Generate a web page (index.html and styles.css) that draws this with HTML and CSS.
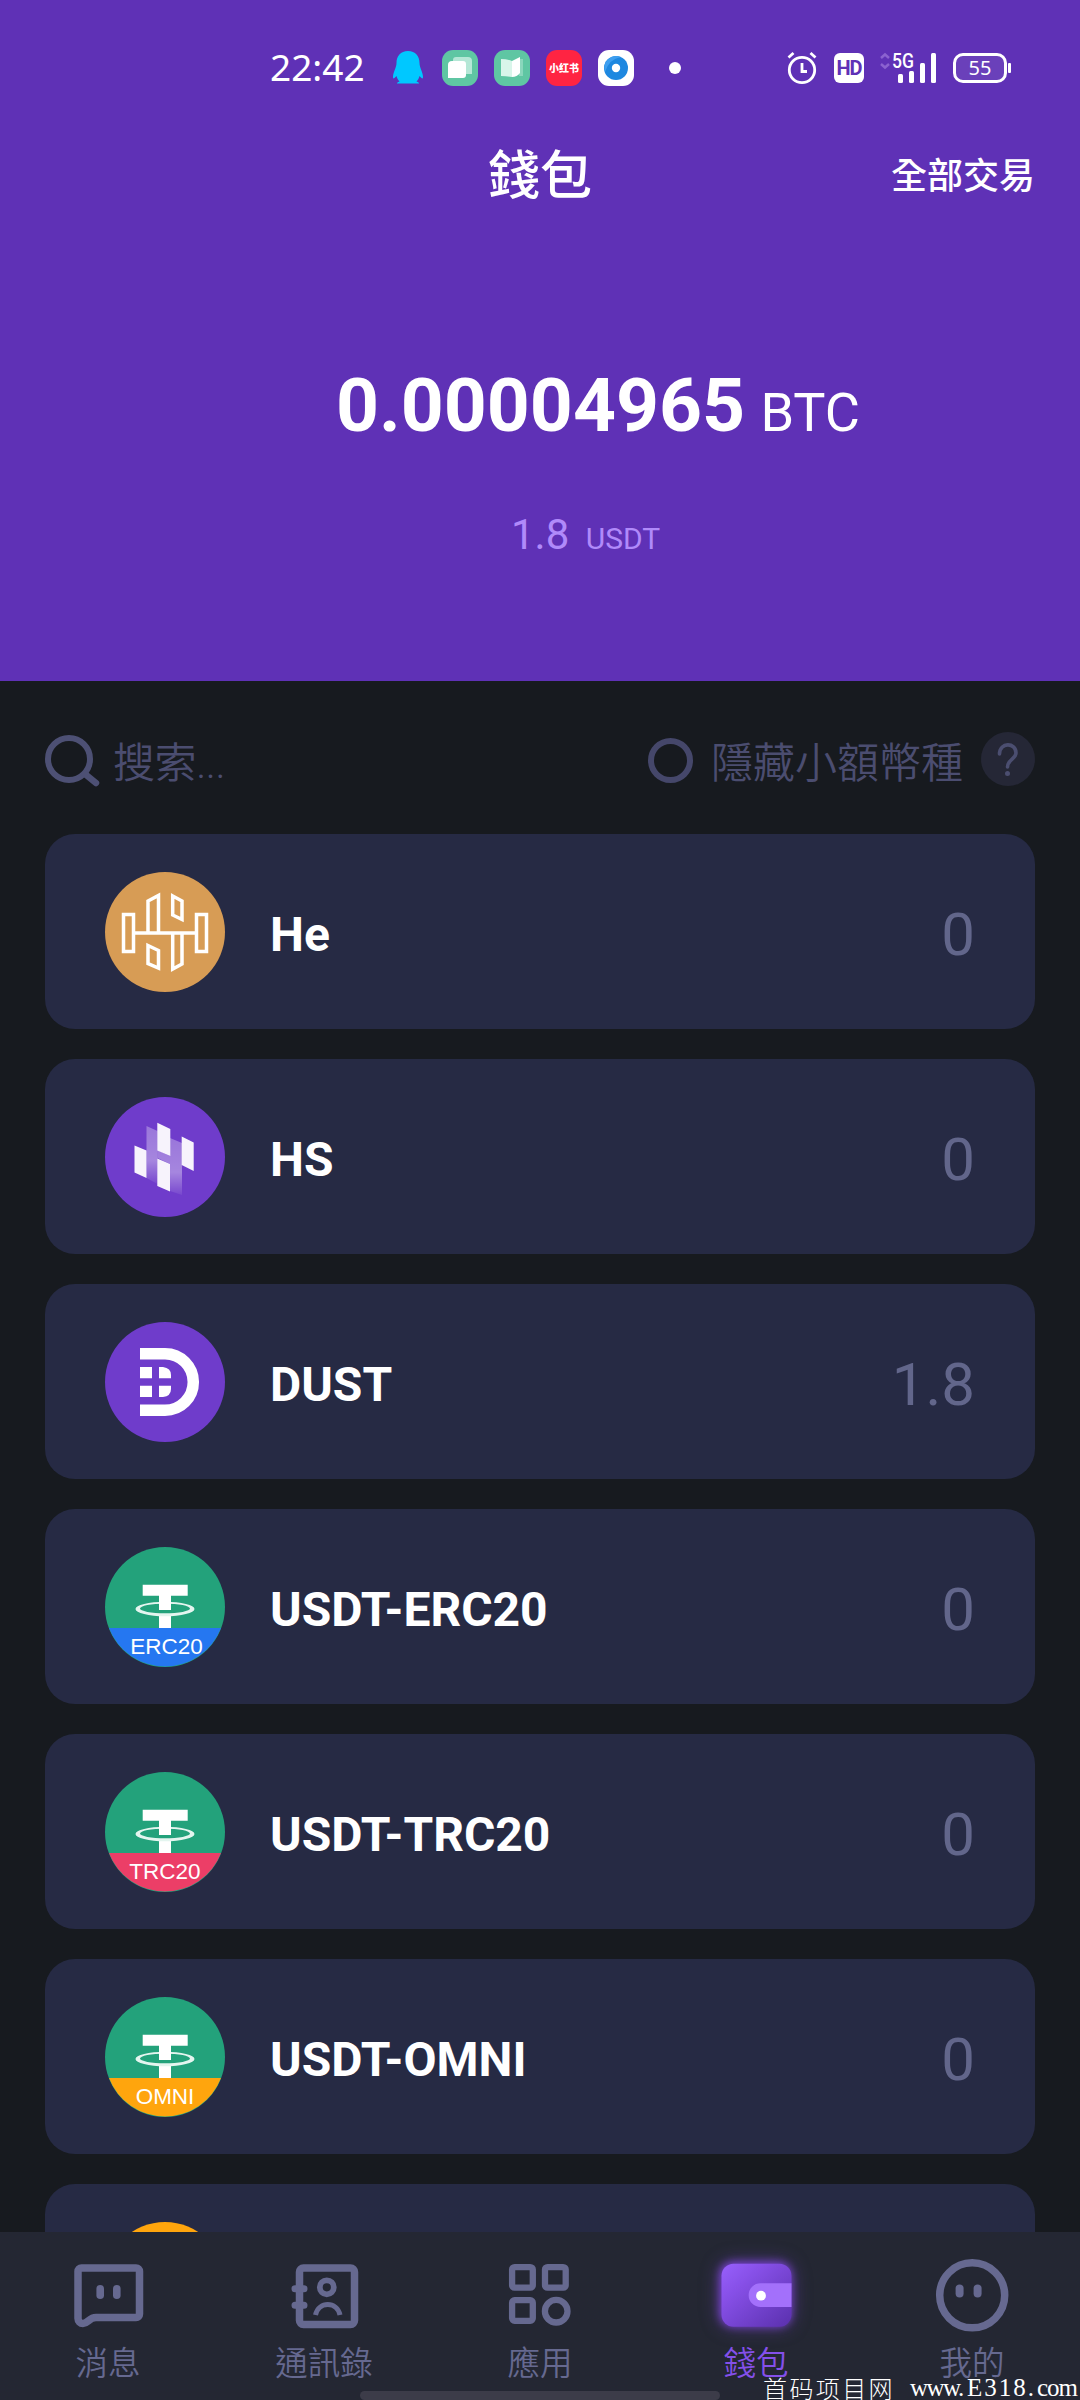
FILE: index.html
```
<!DOCTYPE html>
<html lang="zh-Hant">
<head>
    <meta charset="UTF-8">
    <meta name="viewport" content="width=device-width, initial-scale=1.0">
    <title>錢包</title>
    <link rel="stylesheet" href="styles.css">
</head>
<body>

<!-- Shared symbols -->
<svg class="symbols" width="0" height="0">
    <symbol id="tether" viewBox="0 0 120 120">
        <circle cx="60" cy="60" r="60" fill="#23a27b"/>
        <path d="M4 81A60 60 0 0 0 116 81z" fill="currentColor"/>
        <path d="M37.700 37.700h45v11H66V63H54V48.700H37.700z" fill="#fff"/>
        <path d="M54 68.500h12V81H54z" fill="#fff"/>
        <path fill-rule="evenodd" d="M30.500 62a29.500 7.200 0 1 0 59 0a29.500 7.200 0 1 0-59 0zM35 61.500a25 4.800 0 1 1 50 0a25 4.800 0 1 1-50 0z" fill="#e4f5ef"/>
        <path d="M54 50h12v13H54z" fill="#fff"/>
    </symbol>
</svg>

<header class="header">
    <div class="status">
        <span class="time">22:42</span>
        <div class="notifications">
            <svg width="32" height="36" viewBox="0 0 32 36">
                <path d="M16 1c-7.500 0-11.500 5-11.500 12 0 5-3.500 9-3.500 14 0 2 1 2 3.500-1 .5 2 1.500 4 3 5.500-2 .8-2.500 1.500-2.500 2h22c0-.5-.5-1.200-2.500-2 1.500-1.500 2.500-3.500 3-5.500 2.500 3 3.500 3 3.500 1 0-5-3.500-9-3.500-14C27.500 6 23.500 1 16 1z" fill="#00c8ff"/>
            </svg>
            <svg width="36" height="36" viewBox="0 0 36 36">
                <rect width="36" height="36" rx="11" fill="#5fc6a3"/>
                <path d="M14 7h12q4 0 4 4v13H11V10q0-3 3-3z" fill="#b5e7d6"/>
                <path d="M10 11h11q3 0 3 3v11q0 3-3 3H6V15q0-4 4-4z" fill="#fff"/>
            </svg>
            <svg width="36" height="36" viewBox="0 0 36 36">
                <rect width="36" height="36" rx="11" fill="#5fc6a3"/>
                <path d="M25 9h4v17h-4z" fill="#8ad6bc"/>
                <path d="M7 9q6 0 11 2v16q-5-1-11-1z" fill="#d9f5ea"/>
                <path d="M18 11l8-4v16q-3 4-8 4z" fill="#fff"/>
            </svg>
            <span class="app-red">小红书</span>
            <svg width="36" height="36" viewBox="0 0 36 36">
                <rect width="36" height="36" rx="11" fill="#fff"/>
                <circle cx="18" cy="18" r="12" fill="#1e88e0"/>
                <path d="M7 22a12 12 0 0 1 16-15q-12 2-16 15z" fill="#3e9ff0"/>
                <circle cx="18" cy="18" r="4.200" fill="#fff"/>
            </svg>
        </div>
        <span class="dot"></span>
        <div class="system">
            <svg width="30" height="32" viewBox="0 0 30 32" fill="none" stroke="#fff" stroke-width="2.800">
                <circle cx="15" cy="18" r="12.700"/>
                <path d="M15 11v8.500h5M1.500 5.500l5-4.500M28.500 5.500l-5-4.500"/>
            </svg>
            <span class="hd">HD</span>
            <svg width="60" height="32" viewBox="0 0 60 32">
                <path d="M3 6l4-3.500L11 6M3 12l4 3.500 4-3.500" fill="none" stroke="#8b62d0" stroke-width="2.500"/>
                <text class="net" x="14" y="16" textLength="22" lengthAdjust="spacingAndGlyphs">5G</text>
                <g fill="#fff">
                    <rect x="20" y="22" width="5" height="9" rx="1.500"/>
                    <rect x="31" y="19" width="5" height="12" rx="1.500"/>
                    <rect x="42" y="11" width="5" height="20" rx="1.500"/>
                    <rect x="53" y="1" width="5" height="30" rx="1.500"/>
                </g>
            </svg>
            <div class="battery">55</div>
        </div>
    </div>

    <div class="titlebar">
        <h1>錢包</h1>
        <a class="all">全部交易</a>
    </div>

    <div class="balance"><b>0.00004965</b> <span>BTC</span></div>
    <div class="fiat">1.8 <span>USDT</span></div>
</header>

<main class="wallet">
    <div class="tools">
        <svg width="56" height="54" viewBox="0 0 56 54" fill="none" stroke="#4d5074">
            <circle cx="24" cy="27" r="21" stroke-width="6"/>
            <path d="M40 42l11 9" stroke-width="6.500" stroke-linecap="round"/>
        </svg>
        <span class="search">搜索...</span>
        <span class="radio"></span>
        <span class="hide">隱藏小額幣種</span>
        <svg width="54" height="54" viewBox="0 0 54 54">
            <circle cx="27" cy="27" r="27" fill="#252736"/>
            <path d="M18.500 22c0-12 16.500-12 16.500-1 0 6-8.500 6.500-8.500 14" fill="none" stroke="#4b4e70" stroke-width="3.600" stroke-linecap="round"/>
            <circle cx="26.500" cy="41.500" r="2.500" fill="#4b4e70"/>
        </svg>
    </div>

    <div class="coin">
        <svg class="logo" viewBox="0 0 120 120">
            <circle cx="60" cy="60" r="60" fill="#d79c55"/>
            <g fill="none" stroke="#fff" stroke-width="3.500">
                <path d="M18.500 42.500h10v37h-10zM91.500 42.500h10v37h-10zM28.500 61h63"/>
                <path d="M43 60V29l10.500-5.500V60M67.700 61v36l9.300-5V61"/>
                <path d="M67.700 24l9.300 5v18.500l-9.300-4.500zM43 73.500l10.500 5V96L43 91.500z"/>
            </g>
        </svg>
        <span class="name">He</span>
        <span class="amount">0</span>
    </div>

    <div class="coin">
        <svg class="logo" viewBox="0 0 120 120">
            <defs>
                <linearGradient id="fade" x1="0" y1="0" x2="0" y2="1">
                    <stop offset="0" stop-color="#fff" stop-opacity=".3"/>
                    <stop offset=".6" stop-color="#fff" stop-opacity=".38"/>
                    <stop offset="1" stop-color="#fff" stop-opacity=".06"/>
                </linearGradient>
            </defs>
            <circle cx="60" cy="60" r="60" fill="#6f3ccb"/>
            <path d="M41.500 29l11 5v53l-11-6z" fill="url(#fade)"/>
            <path d="M52.500 53l12.500 6v8l-12.500-6zM65 41l12 5v52l-12-4z" fill="url(#fade)"/>
            <path d="M29.500 48.500l12 5V81l-12-5.500zM52.300 25.700l13 6.300v27l-13-5.500zM76.700 39.500l12 6V74l-12-6zM52.300 61.500L65 67v27.500L52.300 89z" fill="#f7f3fc"/>
        </svg>
        <span class="name">HS</span>
        <span class="amount">0</span>
    </div>

    <div class="coin">
        <svg class="logo" viewBox="0 0 120 120">
            <circle cx="60" cy="60" r="60" fill="#6f3ccb"/>
            <path d="M35 31.700h25a28.300 28.300 0 0 1 0 56.600H35" fill="none" stroke="#fff" stroke-width="11.500"/>
            <path d="M35 45h12v11.300H35zM35 63.700h12V75H35zM54 45h4q8 1 8 8v3.300H54zM54 63.700h12V67q0 7-8 8h-4z" fill="#fff"/>
        </svg>
        <span class="name">DUST</span>
        <span class="amount">1.8</span>
    </div>

    <div class="coin">
        <svg class="logo erc" viewBox="0 0 120 120">
            <use href="#tether"/>
            <text x="61.500" y="107">ERC20</text>
        </svg>
        <span class="name">USDT-ERC20</span>
        <span class="amount">0</span>
    </div>

    <div class="coin">
        <svg class="logo trc" viewBox="0 0 120 120">
            <use href="#tether"/>
            <text x="60" y="107">TRC20</text>
        </svg>
        <span class="name">USDT-TRC20</span>
        <span class="amount">0</span>
    </div>

    <div class="coin">
        <svg class="logo omni" viewBox="0 0 120 120">
            <use href="#tether"/>
            <text x="60" y="107">OMNI</text>
        </svg>
        <span class="name">USDT-OMNI</span>
        <span class="amount">0</span>
    </div>

    <div class="coin">
        <svg class="logo" viewBox="0 0 120 120">
            <circle cx="60" cy="60" r="60" fill="#ffa50d"/>
        </svg>
    </div>
</main>

<nav class="tabs">
    <a class="tab">
        <svg viewBox="0 0 72 72">
            <path d="M9.500 8H64a3.500 3.500 0 0 1 3.500 3.500V54a3.500 3.500 0 0 1-3.500 3.500H24c-7 0-8 6-13 6a5 5 0 0 1-5-5V11.500A3.500 3.500 0 0 1 9.500 8z" fill="none" stroke="currentColor" stroke-width="7.500"/>
            <rect x="24.400" y="25" width="7.600" height="14" rx="3.800" fill="currentColor"/>
            <rect x="41" y="25" width="7.600" height="14" rx="3.800" fill="currentColor"/>
        </svg>
        <span>消息</span>
    </a>
    <a class="tab">
        <svg viewBox="0 0 72 72" fill="none" stroke="currentColor">
            <rect x="11.500" y="8" width="55" height="56.500" rx="4" stroke-width="7.500"/>
            <path d="M7 28.700h9M7 45.300h9" stroke-width="7" stroke-linecap="round"/>
            <circle cx="38.800" cy="27.300" r="7" stroke-width="5.800"/>
            <path d="M27.500 55c3-14 21.500-14 24.500 0" stroke-width="5"/>
        </svg>
        <span>通訊錄</span>
    </a>
    <a class="tab">
        <svg viewBox="0 0 72 72" fill="none" stroke="currentColor" stroke-width="6.300">
            <rect x="8.100" y="7.100" width="20.700" height="20.600" rx="2.500"/>
            <rect x="41" y="7.100" width="20.700" height="20.600" rx="2.500"/>
            <rect x="8.100" y="40.200" width="20.700" height="20.600" rx="2.500"/>
            <circle cx="52.200" cy="51.200" r="11.300"/>
        </svg>
        <span>應用</span>
    </a>
    <a class="tab active">
        <svg class="glow" viewBox="0 0 72 72">
            <defs>
                <linearGradient id="purse" x1="0" y1="0" x2="1" y2="1">
                    <stop offset="0" stop-color="#9860fc"/>
                    <stop offset=".3" stop-color="#8750e8"/>
                    <stop offset="1" stop-color="#5a30ad"/>
                </linearGradient>
            </defs>
            <rect x="1.500" y="3.700" width="70" height="63" rx="12" fill="url(#purse)"/>
            <path d="M71.500 23.300h-31a11.850 11.850 0 0 0 0 23.700h31z" fill="#a370fb"/>
            <circle cx="41" cy="35.700" r="4.900" fill="#fff"/>
        </svg>
        <span>錢包</span>
    </a>
    <a class="tab">
        <svg viewBox="0 0 72 72">
            <circle cx="36.200" cy="35.300" r="32.500" fill="none" stroke="currentColor" stroke-width="7.500"/>
            <rect x="19.600" y="24.500" width="8" height="13" rx="4" fill="currentColor"/>
            <rect x="37.600" y="24.500" width="8" height="13" rx="4" fill="currentColor"/>
        </svg>
        <span>我的</span>
    </a>
    <div class="home-bar"></div>
</nav>

<div class="watermark"><span class="site">首码项目网</span><span class="www">www.</span><span class="host">E318.</span><span class="com">com</span></div>

</body>
</html>
```
FILE: styles.css
```
* {
    box-sizing: border-box;
}
body {
    width: 1080px;
    height: 2400px;
    margin: 0;
    display: flex;
    flex-direction: column;
    overflow: hidden;
    position: relative;
    background-color: #171a1f;
    color: #fff;
    font-family: Roboto, "Noto Sans CJK TC", sans-serif;
}
svg {
    display: block;
    flex-shrink: 0;
    overflow: visible;
}
.symbols {
    position: absolute;
}

/* header */
.header {
    height: 681px;
    flex-shrink: 0;
    background-color: #5f31b6;
}
.status {
    height: 136px;
    padding: 0 69px 0 270px;
    display: flex;
    align-items: center;
}
.time {
    width: 122px;
    padding-bottom: 2px;
    font: 37px/40px "Noto Sans", sans-serif;
}
.notifications {
    display: flex;
    gap: 16px;
    margin-right: 35px;
}
.notifications svg:first-child {
    margin-right: 2px;
}
.app-red {
    width: 36px;
    height: 36px;
    border-radius: 11px;
    background-color: #ff2442;
    font: 900 10px/36px "Noto Sans CJK SC", sans-serif;
    text-align: center;
    white-space: nowrap;
}
.dot {
    width: 12px;
    height: 12px;
    border-radius: 50%;
    background-color: #fff;
}
.system {
    display: flex;
    align-items: center;
    margin-left: auto;
}
.hd {
    width: 30px;
    height: 30px;
    margin: 0 14px 0 17px;
    border-radius: 6px;
    background-color: #fff;
    color: #5f31b6;
    font: bold 20px/31px Roboto, sans-serif;
    letter-spacing: -1px;
    text-align: center;
}
.net {
    font: 500 20px Roboto, sans-serif;
    fill: #fff;
}
.battery {
    position: relative;
    width: 54px;
    height: 30px;
    margin-left: 15px;
    margin-right: 4px;
    border: 3px solid #fff;
    border-radius: 10px;
    background-color: #6a40ba;
    font: 20px/23px "Noto Sans", sans-serif;
    text-align: center;
}
.battery::after {
    content: "";
    position: absolute;
    left: 52px;
    top: 7px;
    width: 3px;
    height: 10px;
    border-radius: 1px;
    background-color: #fff;
}
.titlebar {
    height: 76px;
    padding: 3px 45px 0;
    display: grid;
    grid-template-columns: 1fr auto 1fr;
    align-items: center;
}
.titlebar h1 {
    grid-column: 2;
    margin: 0;
    font-size: 52px;
    font-weight: 500;
    line-height: 76px;
}
.all {
    justify-self: end;
    font-size: 36px;
    font-weight: 500;
    line-height: 76px;
}
.balance {
    padding: 143px 0 0 336px;
    font-size: 54px;
    line-height: 100px;
    white-space: nowrap;
}
.balance b {
    font-size: 75px;
}
.balance span {
    margin-left: 2px;
}
.fiat {
    padding: 42px 0 0 511px;
    color: #b08afa;
    font-size: 42px;
    line-height: 60px;
}
.fiat span {
    margin-left: 6px;
    font-size: 30px;
}

/* coin list */
.wallet {
    height: 1551px;
    flex-shrink: 0;
    padding: 0 45px;
    overflow: hidden;
}
.tools {
    height: 153px;
    padding-top: 3px;
    display: flex;
    align-items: center;
    color: #4b4d70;
    font-size: 42px;
    font-weight: 350;
}
.search {
    margin-left: 12px;
    letter-spacing: -0.4px;
}
.radio {
    width: 45px;
    height: 45px;
    margin: 3px 18px 0 auto;
    border: 6px solid #45476a;
    border-radius: 50%;
}
.hide {
    margin-right: 18px;
}
.coin {
    height: 195px;
    margin-bottom: 30px;
    padding: 0 60px;
    display: flex;
    align-items: center;
    border-radius: 30px;
    background-color: #262a44;
}
.logo {
    width: 120px;
    height: 120px;
}
.logo text {
    font: 22.5px "Liberation Sans", sans-serif;
    text-anchor: middle;
    fill: #fff;
}
.erc {
    color: #2577f1;
}
.trc {
    color: #ec3e67;
}
.omni {
    color: #ffa50d;
}
.name {
    margin-left: 45px;
    padding-top: 6px;
    font-size: 48px;
    font-weight: bold;
}
.amount {
    margin-left: auto;
    padding-top: 5px;
    color: #62668b;
    font-size: 60px;
}

/* bottom navigation */
.tabs {
    height: 168px;
    flex-shrink: 0;
    position: relative;
    display: grid;
    grid-template-columns: repeat(5, 1fr);
    background-color: #242733;
    color: #666990;
}
.tab {
    padding-top: 28px;
    display: flex;
    flex-direction: column;
    align-items: center;
    font-size: 32.5px;
    font-weight: 350;
    line-height: 40px;
}
.tab svg {
    width: 72px;
    height: 72px;
    margin-bottom: 12px;
}
.tab.active {
    color: #8450ea;
}
.glow {
    filter: drop-shadow(-1px -1px 4px #7d45d8) drop-shadow(0 0 8px rgba(125, 69, 216, 0.5));
}
.home-bar {
    position: absolute;
    left: 360px;
    bottom: 0;
    width: 360px;
    height: 9px;
    border-radius: 5px;
    background-color: #3c3c49;
}
.watermark {
    position: absolute;
    left: 763px;
    bottom: 0;
    display: flex;
    font: 25px/24px "Liberation Serif", serif;
    white-space: nowrap;
}
.site {
    width: 147px;
    font: 300 24px/24px "Noto Sans CJK SC", sans-serif;
    letter-spacing: 2.4px;
}
.www {
    width: 57px;
    letter-spacing: -1.5px;
}
.host {
    width: 70px;
    letter-spacing: 2px;
}
.com {
    letter-spacing: -1px;
}
```
